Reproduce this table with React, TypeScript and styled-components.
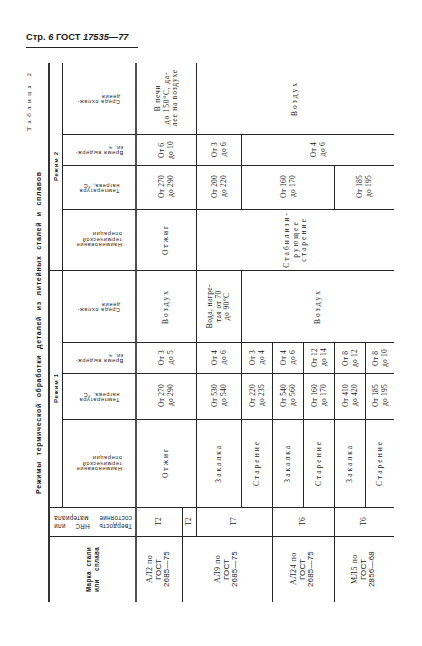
import React from 'react';
import styled, { createGlobalStyle } from 'styled-components';

const GlobalStyle = createGlobalStyle`
  html, body {
    margin: 0;
    padding: 0;
    background: #ffffff;
  }
  body {
    font-family: 'Liberation Serif', 'Times New Roman', serif;
    color: #1a1a1a;
  }
`;

const Page = styled.div`
  width: 422px;
  height: 646px;
  box-sizing: border-box;
  padding: 32px 0 0 24px;
  display: flex;
  flex-direction: column;
  overflow: hidden;
`;

const RunningHead = styled.div`
  margin-left: 2px;
  width: 112px;
  padding-bottom: 4px;
  border-bottom: 1.5px solid #262626;
  font-family: 'Liberation Sans', Arial, sans-serif;
  font-weight: 700;
  font-size: 9.3px;
  line-height: 11px;
  white-space: nowrap;
`;

const Num = styled.span`
  font-style: italic;
`;

const Sheet = styled.div`
  display: flex;
  margin-top: 14.5px;
`;

const Caption = styled.div`
  writing-mode: vertical-rl;
  transform: rotate(180deg);
  width: 20px;
  height: 539px;
  font-size: 7px;
  line-height: 10px;
  white-space: nowrap;
`;

const TableNo = styled.div`
  text-align: end;
  padding-inline-end: 7px;
  letter-spacing: 3.5px;
  font-family: 'Liberation Serif', serif;
`;

const Title = styled.div`
  text-align: center;
  font-family: 'Liberation Sans', Arial, sans-serif;
  font-weight: 700;
  letter-spacing: 0.7px;
  word-spacing: 3px;
`;

const Grid = styled.div`
  display: grid;
  margin-left: 4px;
  grid-template-columns: 13px 74px 46px 14px 45px 31px 31px 31px 31px 28px;
  grid-template-rows: 72px 31px 44px 61px 72px 31px 46px 88px 29px 65px;
  border-left: 2px solid #333;
`;

type Edge = 'none' | 'thin' | 'thick';

const edge = (e: Edge) =>
  e === 'none' ? 'none' : e === 'thick' ? '2px solid #505050' : '1px solid #262626';

const Cell = styled.div<{
  $col: number;
  $span?: number;
  $row: number;
  $rowSpan?: number;
  $right: Edge;
  $bottom: boolean;
}>`
  grid-column: ${p => p.$col} / span ${p => p.$span ?? 1};
  grid-row: ${p => p.$row} / span ${p => p.$rowSpan ?? 1};
  box-sizing: border-box;
  min-width: 0;
  display: flex;
  align-items: center;
  justify-content: center;
  overflow: hidden;
  border-right: ${p => edge(p.$right)};
  border-bottom: ${p => (p.$bottom ? '1px solid #262626' : 'none')};
`;

const DataText = styled.div<{ $track: number }>`
  writing-mode: vertical-rl;
  transform: rotate(180deg);
  text-align: center;
  white-space: pre;
  font-family: 'Liberation Serif', 'Times New Roman', serif;
  font-size: 7.5px;
  line-height: 8.5px;
  letter-spacing: ${p => p.$track}px;
`;

const BandText = styled.div`
  writing-mode: vertical-rl;
  transform: rotate(180deg);
  white-space: nowrap;
  font-family: 'Liberation Sans', Arial, sans-serif;
  font-weight: 700;
  font-size: 6px;
  line-height: 8px;
  letter-spacing: 0.8px;
`;

const HeadText = styled.div`
  transform: rotate(180deg);
  white-space: pre;
  text-align: left;
  font-family: 'Liberation Sans', Arial, sans-serif;
  font-size: 5.6px;
  line-height: 5.4px;
  letter-spacing: 0.6px;
`;

const WideHead = styled.div`
  transform: rotate(180deg);
  width: 78px;
  font-family: 'Liberation Sans', Arial, sans-serif;
  font-size: 6.3px;
  line-height: 8px;
  letter-spacing: 0.3px;
`;

const MarkHead = styled.div`
  writing-mode: vertical-rl;
  transform: rotate(180deg);
  height: 45px;
  font-family: 'Liberation Sans', Arial, sans-serif;
  font-weight: 700;
  font-size: 6.3px;
  line-height: 8px;
  letter-spacing: 0.3px;
`;

const JustLine = styled.span`
  display: block;
  text-align: justify;
  text-align-last: justify;
  white-space: nowrap;
`;

const Grade = styled.div`
  writing-mode: vertical-rl;
  transform: rotate(180deg);
  text-align: center;
  font-size: 8px;
  line-height: 8.7px;
  white-space: nowrap;
`;

const GradeLine = styled.span<{ $sans?: boolean }>`
  display: block;
  font-family: ${p =>
    p.$sans ? "'Liberation Sans', Arial, sans-serif" : "'Liberation Serif', serif"};
  letter-spacing: ${p => (p.$sans ? '0.2px' : '0.5px')};
`;

const subHeads = [
  'Среда охлаж-\nдения',
  'Время выдерж-\nки, ч',
  'Температура\nнагрева, °С',
  'Наименование\nтермической\nоперации',
];

type DataCell = { col: number; span?: number; row: number; text: string; track?: number };

const cells: DataCell[] = [
  { col: 3, span: 2, row: 1, text: 'В печи\nдо 150°С, да-\nлее на воздухе', track: 0.8 },
  { col: 5, span: 6, row: 1, text: 'Воздух', track: 2 },

  { col: 3, span: 2, row: 2, text: 'От 6\nдо 10' },
  { col: 5, row: 2, text: 'От 3\nдо 6' },
  { col: 6, span: 5, row: 2, text: 'От 4\nдо 6' },

  { col: 3, span: 2, row: 3, text: 'От 270\nдо 290' },
  { col: 5, row: 3, text: 'От 200\nдо 220' },
  { col: 6, span: 3, row: 3, text: 'От 160\nдо 170' },
  { col: 9, span: 2, row: 3, text: 'От 185\nдо 195' },

  { col: 3, span: 2, row: 4, text: 'Отжиг', track: 2 },
  { col: 5, span: 6, row: 4, text: 'Стабилизи-\nрующее\nстарение', track: 2 },

  { col: 3, span: 2, row: 5, text: 'Воздух', track: 2 },
  { col: 5, row: 5, text: 'Вода, нагре-\nтая от 70\nдо 90°С', track: 0.4 },
  { col: 6, span: 5, row: 5, text: 'Воздух', track: 2 },

  { col: 3, span: 2, row: 6, text: 'От 3\nдо 5' },
  { col: 5, row: 6, text: 'От 4\nдо 6' },
  { col: 6, row: 6, text: 'От 3\nдо 4' },
  { col: 7, row: 6, text: 'От 4\nдо 6' },
  { col: 8, row: 6, text: 'От 12\nдо 14' },
  { col: 9, row: 6, text: 'От 8\nдо 12' },
  { col: 10, row: 6, text: 'От 8\nдо 10' },

  { col: 3, span: 2, row: 7, text: 'От 270\nдо 290' },
  { col: 5, row: 7, text: 'От 530\nдо 540' },
  { col: 6, row: 7, text: 'От 220\nдо 235' },
  { col: 7, row: 7, text: 'От 540\nдо 560' },
  { col: 8, row: 7, text: 'От 160\nдо 170' },
  { col: 9, row: 7, text: 'От 410\nдо 420' },
  { col: 10, row: 7, text: 'От 185\nдо 195' },

  { col: 3, span: 2, row: 8, text: 'Отжиг', track: 2 },
  { col: 5, row: 8, text: 'Закалка', track: 2 },
  { col: 6, row: 8, text: 'Старение', track: 2 },
  { col: 7, row: 8, text: 'Закалка', track: 2 },
  { col: 8, row: 8, text: 'Старение', track: 2 },
  { col: 9, row: 8, text: 'Закалка', track: 2 },
  { col: 10, row: 8, text: 'Старение', track: 2 },

  { col: 3, row: 9, text: 'Т2' },
  { col: 4, row: 9, text: 'Т2' },
  { col: 5, span: 2, row: 9, text: 'Т7' },
  { col: 7, span: 2, row: 9, text: 'Т6' },
  { col: 9, span: 2, row: 9, text: 'Т6' },
];

const grades = [
  { col: 3, span: 1, name: 'АЛ2 по', std: '2685—75' },
  { col: 4, span: 3, name: 'АЛ9 по', std: '2685—75' },
  { col: 7, span: 2, name: 'АЛ24 по', std: '2685—75' },
  { col: 9, span: 2, name: 'МЛ5 по', std: '2856—68' },
];

const rightOf = (col: number, span = 1): Edge => (col + span - 1 === 10 ? 'none' : 'thin');

export default function App() {
  return (
    <>
      <GlobalStyle />
      <Page>
        <RunningHead>
          Стр. <Num>6</Num> ГОСТ <Num>17535—77</Num>
        </RunningHead>
        <Sheet>
          <Caption>
            <TableNo>Таблица 2</TableNo>
            <Title>Режимы термической обработки деталей из литейных сталей и сплавов</Title>
          </Caption>
          <Grid>
            <Cell $col={1} $row={1} $rowSpan={4} $right="thin" $bottom>
              <BandText>Режим 2</BandText>
            </Cell>
            <Cell $col={1} $row={5} $rowSpan={4} $right="thin" $bottom>
              <BandText>Режим 1</BandText>
            </Cell>
            {[...subHeads, ...subHeads].map((t, i) => (
              <Cell key={'h' + i} $col={2} $row={i + 1} $right="thick" $bottom>
                <HeadText>{t}</HeadText>
              </Cell>
            ))}
            <Cell $col={1} $span={2} $row={9} $right="thick" $bottom>
              <WideHead>
                <JustLine>Твердость HRC или</JustLine>
                <JustLine>состояние материала</JustLine>
              </WideHead>
            </Cell>
            <Cell $col={1} $span={2} $row={10} $right="thick" $bottom={false}>
              <MarkHead>
                <JustLine>Марка стали</JustLine>
                <JustLine>или сплава</JustLine>
              </MarkHead>
            </Cell>

            {cells.map((c, i) => (
              <Cell
                key={'d' + i}
                $col={c.col}
                $span={c.span}
                $row={c.row}
                $right={rightOf(c.col, c.span)}
                $bottom
              >
                <DataText $track={c.track ?? 0.2}>{c.text}</DataText>
              </Cell>
            ))}

            {grades.map(g => (
              <Cell
                key={g.name}
                $col={g.col}
                $span={g.span}
                $row={10}
                $right={rightOf(g.col, g.span)}
                $bottom={false}
              >
                <Grade>
                  <GradeLine>{g.name}</GradeLine>
                  <GradeLine $sans>ГОСТ</GradeLine>
                  <GradeLine $sans>{g.std}</GradeLine>
                </Grade>
              </Cell>
            ))}
          </Grid>
        </Sheet>
      </Page>
    </>
  );
}
